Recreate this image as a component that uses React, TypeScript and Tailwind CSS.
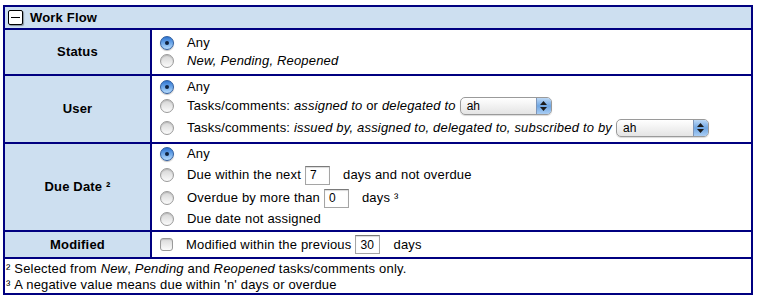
import React from "react";

const NAVY = "border-[#000080]";

function Radio({ on = false }: { on?: boolean }) {
  if (on) {
    return (
      <span className="relative inline-flex h-[14px] w-[14px] shrink-0 items-center justify-center rounded-full border border-[#2f5d9e] bg-linear-to-b from-[#2e74d0] via-[#6ea8ea] to-[#b9dcfb] shadow-[0_1px_1px_rgba(0,0,0,0.25)]">
        <span className="h-[4px] w-[4px] rounded-full bg-[#10233f]" />
      </span>
    );
  }
  return (
    <span className="inline-block h-[14px] w-[14px] shrink-0 rounded-full border border-[#9a9a9a] bg-linear-to-b from-[#d4d4d4] to-[#fbfbfb] shadow-[inset_0_1px_1px_rgba(0,0,0,0.15)]" />
  );
}

function Checkbox() {
  return (
    <span className="inline-block h-[13px] w-[13px] shrink-0 rounded-[3px] border border-[#9a9a9a] bg-linear-to-b from-[#dadada] to-[#fbfbfb] shadow-[inset_0_1px_1px_rgba(0,0,0,0.12)]" />
  );
}

function Select({ value, width }: { value: string; width: string }) {
  return (
    <span
      className={`ml-[4px] inline-flex h-[18px] ${width} items-stretch overflow-hidden rounded-[5px] border border-[#9a9a9a] bg-linear-to-b from-white to-[#e4e4e4] tracking-normal shadow-[0_1px_1px_rgba(0,0,0,0.15)]`}
    >
      <span className="flex flex-1 items-center pl-[6px] text-[12px] leading-none text-black">{value}</span>
      <span className="flex w-[15px] flex-col items-center justify-center gap-[2px] border-l border-[#7d95b8] bg-linear-to-b from-[#bcd8f5] via-[#6fa6e3] to-[#a9cdf3]">
        <svg width="7" height="4" viewBox="0 0 7 4"><path d="M0 4 L3.5 0 L7 4 Z" fill="#1b1b1b" /></svg>
        <svg width="7" height="4" viewBox="0 0 7 4"><path d="M0 0 L3.5 4 L7 0 Z" fill="#1b1b1b" /></svg>
      </span>
    </span>
  );
}

function Field({ value }: { value: string }) {
  return (
    <span className="mx-[4px] inline-flex h-[19px] w-[25px] items-center border border-[#a5a5a5] border-t-[#7a7a7a] bg-white pl-[4px] text-[12px] leading-none tracking-normal shadow-[inset_0_1px_1px_rgba(0,0,0,0.15)]">
      {value}
    </span>
  );
}

function Line({ h, on, checkbox, children, className = "" }: { h: string; on?: boolean; checkbox?: boolean; children: React.ReactNode; className?: string }) {
  return (
    <div className={`flex ${h} items-center ${className}`}>
      {checkbox ? <Checkbox /> : <Radio on={on} />}
      <div className="ml-[13px] flex items-center whitespace-nowrap">{children}</div>
    </div>
  );
}

function Row({ label, children, top = true }: { label: React.ReactNode; children: React.ReactNode; top?: boolean }) {
  return (
    <div className={`flex ${top ? `border-t-2 ${NAVY}` : ""}`}>
      <div className={`flex w-[147px] shrink-0 items-center justify-center border-r-2 ${NAVY} bg-[#cddff0] text-[13px] font-bold`}>
        {label}
      </div>
      <div className="flex-1 pl-[8px]">{children}</div>
    </div>
  );
}

export default function App() {
  return (
    <div className="min-h-[299px] bg-white pl-[3px] pt-[5px] text-black" style={{ fontFamily: '"Liberation Sans", Arial, sans-serif' }}>
      <div className={`w-[750px] border-2 ${NAVY} text-[13px] tracking-[0.18px]`}>
        <div className={`flex h-[23px] items-center border-b-2 ${NAVY} bg-[#cddff0] pl-[3px]`}>
          <span className="flex h-[15px] w-[15px] items-center justify-center rounded-[2px] border border-black bg-white shadow-[1px_1px_1px_rgba(0,0,0,0.35)]">
            <span className="h-[1.5px] w-[9px] bg-black" />
          </span>
          <span className="ml-[7px] font-bold">Work Flow</span>
        </div>

        <Row label="Status" top={false}>
          <div className="pb-[4px] pt-[4px]">
            <Line h="h-[18px]" on>Any</Line>
            <Line h="h-[18px]"><i>New, Pending, Reopened</i></Line>
          </div>
        </Row>

        <Row label="User">
          <div className="pb-[4px] pt-[2px]">
            <Line h="h-[18px]" on>Any</Line>
            <Line h="h-[20px]">
              Tasks/comments:&nbsp;<i>assigned to</i>&nbsp;or&nbsp;<i>delegated to</i>
              <Select value="ah" width="w-[92px]" />
            </Line>
            <Line h="h-[20px]" className="mt-[2px]">
              Tasks/comments:&nbsp;<i>issued by, assigned to, delegated to, subscribed to by</i>
              <Select value="ah" width="w-[93px]" />
            </Line>
          </div>
        </Row>

        <Row label={<span>Due Date ²</span>}>
          <div className="pb-[2px] pt-[1px]">
            <Line h="h-[18px]" on>Any</Line>
            <Line h="h-[22px]" className="mt-[1px]">
              Due within the next
              <Field value="7" />
              <span className="ml-[9px]">days and not overdue</span>
            </Line>
            <Line h="h-[22px]" className="mt-[1px]">
              Overdue by more than
              <Field value="0" />
              <span className="ml-[9px]">days ³</span>
            </Line>
            <Line h="h-[18px]" className="mt-[1px]">Due date not assigned</Line>
          </div>
        </Row>

        <Row label="Modified">
          <Line h="h-[25px]" checkbox>
            Modified within the previous
            <Field value="30" />
            <span className="ml-[9px]">days</span>
          </Line>
        </Row>

        <div className={`border-t-2 ${NAVY} pb-0 pl-[1px] pt-[2px]`}>
          <div className="flex h-[16px] items-center whitespace-nowrap">
            ²&nbsp;Selected from&nbsp;<i>New</i>,&nbsp;<i>Pending</i>&nbsp;and&nbsp;<i>Reopened</i>&nbsp;tasks/comments only.
          </div>
          <div className="flex h-[16px] items-center whitespace-nowrap">³&nbsp;A negative value means due within 'n' days or overdue</div>
        </div>
      </div>
    </div>
  );
}
